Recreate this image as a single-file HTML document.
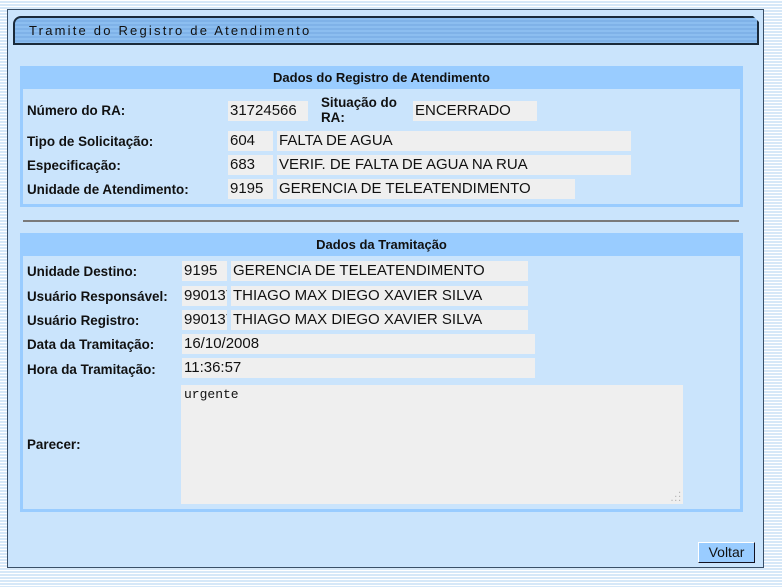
<!DOCTYPE html>
<html><head><meta charset="utf-8"><style>
body{margin:0;width:782px;height:587px;overflow:hidden;position:relative;font-family:"Liberation Sans",sans-serif;
background:repeating-linear-gradient(180deg,#fff 0,#fff 1px,#d6e8f8 1px,#d6e8f8 3px);}
.a{position:absolute}
#panel{left:7px;top:9px;width:755px;height:557px;background:#cae4fc;border:1px solid #3a5068}
#tab{left:13px;top:16px;width:742px;height:25px;border:2px solid #1a2a3a;border-radius:8px 0 0 0;
background:repeating-linear-gradient(180deg,#8cbef0 0,#8cbef0 2px,#7fb2e8 2px,#7fb2e8 4px);
clip-path:polygon(0 0,calc(100% - 6px) 0,100% 6px,100% 100%,0 100%)}
#tab span{position:absolute;left:14px;top:5px;font-size:13px;letter-spacing:2.2px;color:#111}
.sec{background:#cae4fc;border:3px solid #99ccff;box-sizing:border-box}
.hd{background:#99ccff;font-weight:bold;font-size:13px;text-align:center;line-height:23px;color:#111}
.l{font-weight:bold;font-size:13.4px;color:#111}
.v{background:#efefef;font-size:15px;color:#111;height:20px;line-height:20px;padding-left:2px;box-sizing:border-box;overflow:hidden;white-space:nowrap}
</style></head><body>
<div class="a" id="panel"></div>
<div class="a" id="tab"><span>Tramite do Registro de Atendimento</span></div>

<div class="a sec" style="left:20px;top:66px;width:723px;height:141px"></div>
<div class="a hd" style="left:20px;top:66px;width:723px;height:23px">Dados do Registro de Atendimento</div>
<div class="a l" style="left:27px;top:103px">Número do RA:</div>
<div class="a v" style="left:228px;top:101px;width:80px">31724566</div>
<div class="a l" style="left:321px;top:95px;line-height:15px">Situação do<br>RA:</div>
<div class="a v" style="left:413px;top:101px;width:124px">ENCERRADO</div>
<div class="a l" style="left:27px;top:134px">Tipo de Solicitação:</div>
<div class="a v" style="left:228px;top:131px;width:45px">604</div>
<div class="a v" style="left:277px;top:131px;width:354px">FALTA DE AGUA</div>
<div class="a l" style="left:27px;top:158px">Especificação:</div>
<div class="a v" style="left:228px;top:155px;width:45px">683</div>
<div class="a v" style="left:277px;top:155px;width:354px">VERIF. DE FALTA DE AGUA NA RUA</div>
<div class="a l" style="left:27px;top:182px">Unidade de Atendimento:</div>
<div class="a v" style="left:228px;top:179px;width:45px">9195</div>
<div class="a v" style="left:277px;top:179px;width:298px">GERENCIA DE TELEATENDIMENTO</div>

<div class="a" style="left:23px;top:220px;width:716px;height:2px;background:#7a7a7a"></div>

<div class="a sec" style="left:20px;top:233px;width:723px;height:279px"></div>
<div class="a hd" style="left:20px;top:233px;width:723px;height:23px">Dados da Tramitação</div>
<div class="a l" style="left:27px;top:264px">Unidade Destino:</div>
<div class="a v" style="left:182px;top:261px;width:45px">9195</div>
<div class="a v" style="left:231px;top:261px;width:297px">GERENCIA DE TELEATENDIMENTO</div>
<div class="a l" style="left:27px;top:289px">Usuário Responsável:</div>
<div class="a v" style="left:182px;top:286px;width:45px">990137</div>
<div class="a v" style="left:231px;top:286px;width:297px">THIAGO MAX DIEGO XAVIER SILVA</div>
<div class="a l" style="left:27px;top:313px">Usuário Registro:</div>
<div class="a v" style="left:182px;top:310px;width:45px">990137</div>
<div class="a v" style="left:231px;top:310px;width:297px">THIAGO MAX DIEGO XAVIER SILVA</div>
<div class="a l" style="left:27px;top:337px">Data da Tramitação:</div>
<div class="a v" style="left:182px;top:334px;width:353px">16/10/2008</div>
<div class="a l" style="left:27px;top:362px">Hora da Tramitação:</div>
<div class="a v" style="left:182px;top:358px;width:353px">11:36:57</div>
<div class="a l" style="left:27px;top:437px">Parecer:</div>
<div class="a" style="left:181px;top:385px;width:502px;height:119px;background:#efefef;font-family:'Liberation Mono',monospace;font-size:13px;color:#111"><div style="padding:2px 3px">urgente</div>
<div class="a" style="right:2px;bottom:2px;font-size:8px;color:#aaa;line-height:4px;letter-spacing:-1px">&nbsp;&nbsp;.<br>&nbsp;..<br>...</div></div>

<div class="a" style="left:698px;top:542px;width:57px;height:21px;box-sizing:border-box;background:#99ccff;border:1px solid;border-color:#fff #112 #112 #fff;font-size:14px;text-align:center;line-height:19px;color:#111">Voltar</div>
</body></html>
